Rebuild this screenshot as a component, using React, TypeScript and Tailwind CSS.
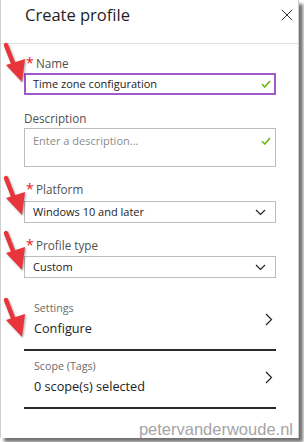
import { X } from 'lucide-react';

const font = { fontFamily: '"Open Sans", "Noto Sans", sans-serif' };

function Arrow({ x, y }: { x: number; y: number }) {
  // tail at (x, y), tip about 15px right and 36px down
  return (
    <svg className="absolute pointer-events-none" style={{ left: x - 6, top: y - 4 }} width="30" height="46" viewBox="0 0 30 46">
      <g style={{ filter: 'drop-shadow(1px 1px 1px rgba(0,0,0,0.35))' }}>
        <line x1="4" y1="4" x2="13" y2="27" stroke="#e8353b" strokeWidth="4.5" strokeLinecap="round" />
        <polygon points="20,41 4,24 23,18" fill="#e8353b" />
      </g>
    </svg>
  );
}

function Check() {
  return (
    <svg width="10" height="8" viewBox="0 0 10 8" className="shrink-0">
      <path d="M1 4.2 L3.8 7 L9 1" fill="none" stroke="#6fb318" strokeWidth="1.6" />
    </svg>
  );
}

function ChevronDown() {
  return (
    <svg width="11" height="7" viewBox="0 0 11 7">
      <path d="M1 1 L5.5 5.5 L10 1" fill="none" stroke="#222" strokeWidth="1.2" />
    </svg>
  );
}

function ChevronRight() {
  return (
    <svg width="8" height="13" viewBox="0 0 8 13">
      <path d="M1 1 L6.5 6.5 L1 12" fill="none" stroke="#222" strokeWidth="1.2" />
    </svg>
  );
}

function Label({ text, required }: { text: string; required?: boolean }) {
  return (
    <div className="flex items-start h-[18px] text-[11.7px] leading-[18px] text-[#505050]">
      {required && <span className="text-[#e81123] text-[14px] leading-[17px] w-[12px] pl-[2px]">*</span>}
      <span>{text}</span>
    </div>
  );
}

function Select({ value }: { value: string }) {
  return (
    <div className="flex items-center justify-between h-[22px] border border-[#bdbdbd] pl-[8px] pr-[9px] text-[11px] text-[#222]">
      <span>{value}</span>
      <ChevronDown />
    </div>
  );
}

function NavRow({ label, value }: { label: string; value: string }) {
  return (
    <div className="flex items-center justify-between border-b-2 border-[#2b2b2b] pl-[10px] pr-[3px] pb-[11px]">
      <div className="flex flex-col">
        <span className="text-[10.7px] leading-[15px] text-[#6b6b6b]">{label}</span>
        <span className="text-[12.7px] leading-[20px] mt-[2px] text-[#222]">{value}</span>
      </div>
      <ChevronRight />
    </div>
  );
}

export default function App() {
  return (
    <div className="w-[304px] h-[442px] bg-white relative overflow-hidden" style={font}>
      <div className="w-[299px] h-[438px] bg-white border-l border-r border-[#cfcfcf] shadow-[4px_4px_3px_rgba(0,0,0,0.55)]">
        {/* header */}
        <div className="h-[44px] border-b border-[#e1e1e1] flex items-start justify-between pl-[24px] pr-[1px]">
          <h1 className="text-[16.5px] leading-[26px] pt-[2px] text-[#1e1e1e]">Create profile</h1>
          <X size={20} strokeWidth={1.2} className="mt-[5px] text-[#333]" />
        </div>

        <div className="pl-[23px] pr-[22px] flex flex-col">
          <div className="mt-[10px]">
            <Label text="Name" required />
          </div>
          <div className="mt-[1px] h-[22px] border-2 border-[#a358c8] flex items-center justify-between pl-[7px] pr-[3px] text-[11px] text-[#222]">
            <span>Time zone configuration</span>
            <Check />
          </div>

          <div className="mt-[14px]">
            <Label text="Description" />
          </div>
          <div className="mt-[1px] h-[39px] border border-[#bdbdbd] flex items-start justify-between pl-[8px] pr-[4px] pt-[4px] text-[11px] text-[#8a8a8a]">
            <span>Enter a description...</span>
            <span className="mt-[4px]"><Check /></span>
          </div>

          <div className="mt-[13px]">
            <Label text="Platform" required />
          </div>
          <div className="mt-[3px]">
            <Select value="Windows 10 and later" />
          </div>

          <div className="mt-[13px]">
            <Label text="Profile type" required />
          </div>
          <div className="mt-[2px]">
            <Select value="Custom" />
          </div>

          <div className="mt-[23px]">
            <NavRow label="Settings" value="Configure" />
          </div>
          <div className="mt-[8px]">
            <NavRow label="Scope (Tags)" value="0 scope(s) selected" />
          </div>
        </div>

        <div className="mt-[10px] pr-[5px] text-right text-[16.5px] leading-[20px] text-[#a4a4a4]" style={{ fontFamily: '"Liberation Sans", Arial, sans-serif' }}>
          petervanderwoude.nl
        </div>
      </div>

      <Arrow x={8} y={45} />
      <Arrow x={8} y={178} />
      <Arrow x={8} y={233} />
      <Arrow x={8} y={300} />
    </div>
  );
}
